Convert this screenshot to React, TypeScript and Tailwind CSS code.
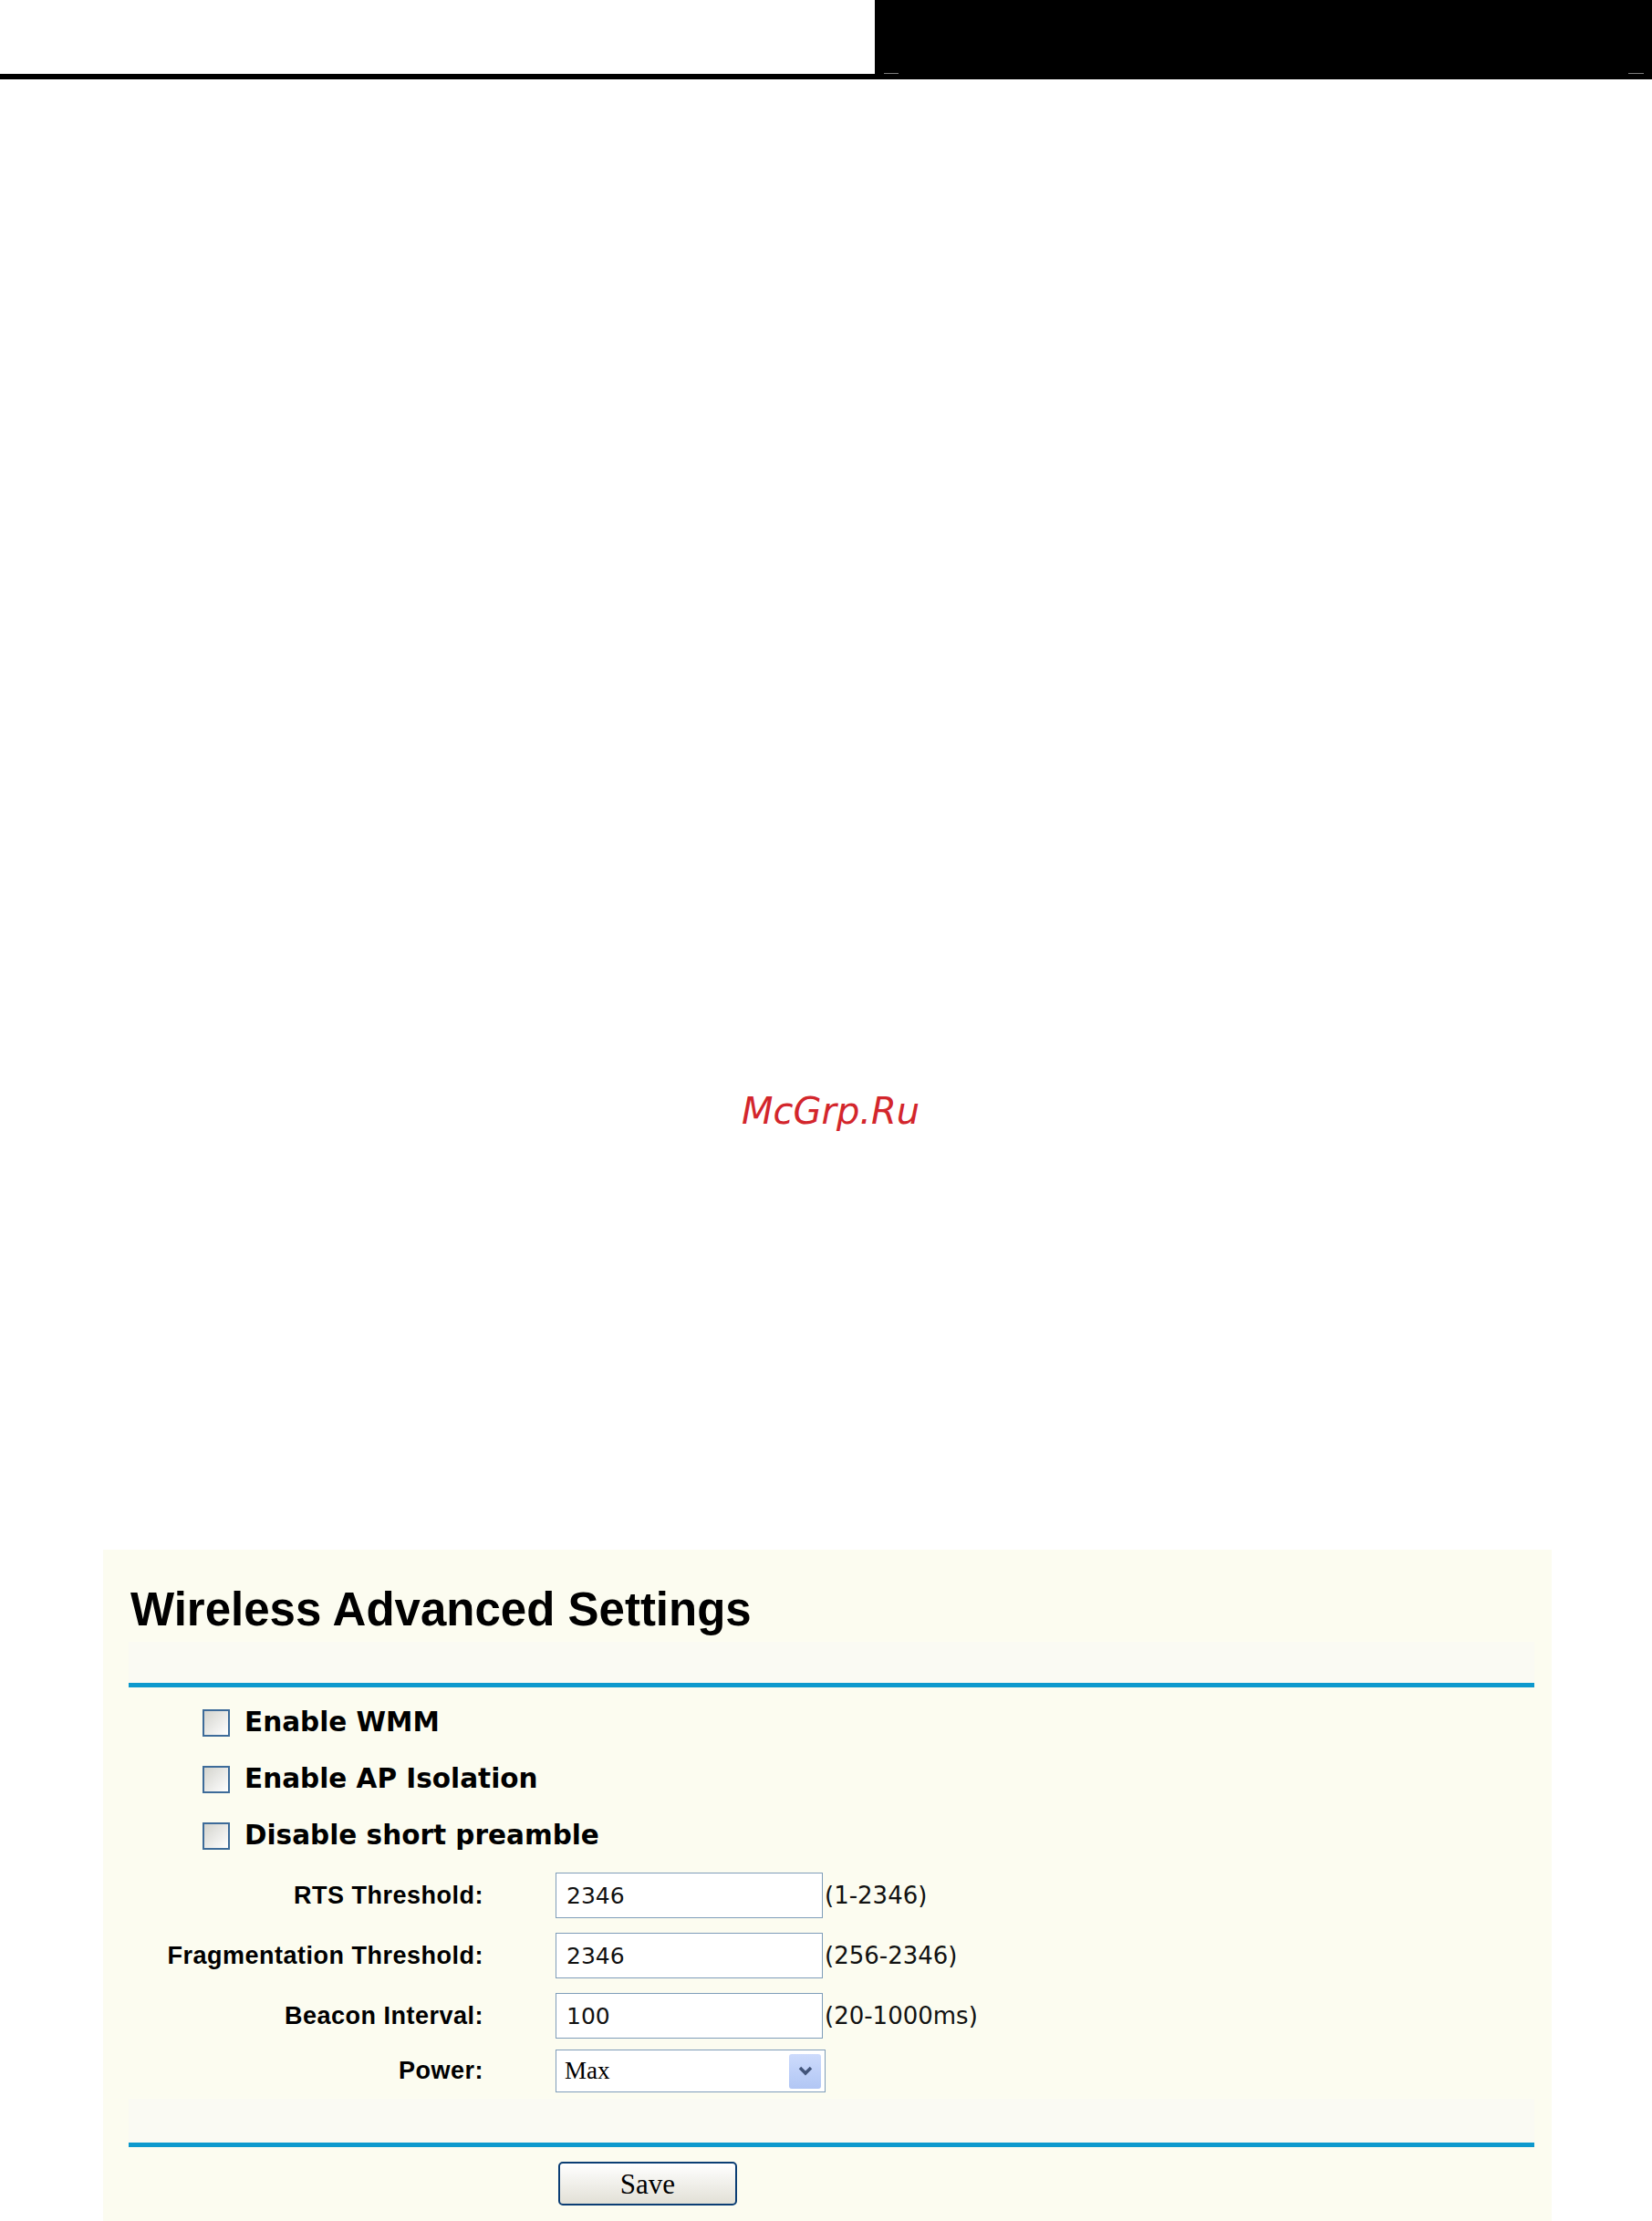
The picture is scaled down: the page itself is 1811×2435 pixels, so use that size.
import React from "react";

const sans = "font-['Liberation_Sans',Arial,sans-serif]";
const deja = "font-['DejaVu_Sans',Verdana,sans-serif]";
const serif = "font-['Liberation_Serif','Times_New_Roman',serif]";

function Checkbox({ label }: { label: string }) {
  return (
    <div className="flex h-[62px] items-center pl-[81px]">
      <span className="h-[30px] w-[30px] shrink-0 border-2 border-[#3d6b99] bg-linear-to-br from-[#d4d4ce] to-white" />
      <span className={`ml-[16px] text-[29.5px] font-bold leading-none text-black ${deja}`}>{label}</span>
    </div>
  );
}

function Label({ text }: { text: string }) {
  return (
    <div className={`w-[389px] shrink-0 text-right text-[27px] font-bold leading-none tracking-[0.5px] text-black ${sans}`}>
      {text}
    </div>
  );
}

function NumberRow({ label, value, range, className = "" }: { label: string; value: string; range: string; className?: string }) {
  return (
    <div className={`flex h-[50px] items-center ${className}`}>
      <Label text={label} />
      <input
        readOnly
        value={value}
        className={`ml-[79px] h-[50px] w-[293px] shrink-0 border border-[#7f9db9] bg-white pl-[11px] text-[25px] text-[#111] outline-none ${deja}`}
      />
      <span className={`ml-[2px] text-[26px] leading-none text-[#111] ${deja}`}>{range}</span>
    </div>
  );
}

export default function App() {
  return (
    <div className="flex h-[2435px] w-[1811px] flex-col overflow-hidden bg-white">
      {/* top strip */}
      <div className="flex h-[81px]">
        <div className="flex-1 bg-white" />
        <div className="flex w-[852px] items-end justify-between bg-black pl-[10px] pr-[9px]">
          <span className="h-px w-[16px] bg-[#7a7a7a]" />
          <span className="h-px w-[17px] bg-[#7a7a7a]" />
        </div>
      </div>
      <div className="h-[6px] bg-black" />

      {/* site mark */}
      <div className={`mt-[1111px] h-[40px] pl-[813px] text-[40px] italic leading-[40px] text-[#d3262c] ${deja}`}>
        McGrp.Ru
      </div>

      {/* settings panel */}
      <div className="ml-[113px] mt-[461px] flex w-[1588px] flex-1 flex-col bg-[#fcfcf0] pl-[28px] pr-[19px] pt-[41px]">
        <h1 className={`h-[50px] pl-[2px] text-[51px] font-bold leading-[50px] text-black ${sans}`}>
          Wireless Advanced Settings
        </h1>
        <div className="mt-[10px] h-[45px] bg-[#fafaf3]" />
        <div className="h-[5px] bg-[#0d99cd]" />

        <div className="pt-[8px]">
          <Checkbox label="Enable WMM" />
          <Checkbox label="Enable AP Isolation" />
          <Checkbox label="Disable short preamble" />
        </div>

        <div className="mt-[9px] flex flex-col">
          <NumberRow label="RTS Threshold:" value="2346" range="(1-2346)" />
          <NumberRow label="Fragmentation Threshold:" value="2346" range="(256-2346)" className="mt-[16px]" />
          <NumberRow label="Beacon Interval:" value="100" range="(20-1000ms)" className="mt-[16px]" />
          <div className="mt-[12px] flex h-[47px] items-center">
            <Label text="Power:" />
            <div className="ml-[79px] flex h-[47px] w-[296px] shrink-0 items-center justify-between border border-[#7f9db9] bg-white pl-[9px] pr-[4px]">
              <span className={`text-[27px] leading-none text-black ${serif}`}>Max</span>
              <span className="flex h-[38px] w-[35px] items-center justify-center rounded-[3px] bg-linear-to-b from-[#cddbfc] to-[#b1c6f4]">
                <svg width="18" height="13" viewBox="0 0 18 13">
                  <path d="M3 3 L9 9 L15 3" fill="none" stroke="#42557a" strokeWidth="3.5" />
                </svg>
              </span>
            </div>
          </div>
        </div>

        <div className="mt-[7px] h-[48px] bg-[#fafaf3]" />
        <div className="h-[5px] bg-[#0d99cd]" />

        <div className="mt-[16px] pl-[471px]">
          <button
            type="button"
            className={`flex h-[48px] w-[196px] items-center justify-center rounded-[5px] border-2 border-[#0b3e74] bg-linear-to-b from-white to-[#e2e0d6] text-[31px] leading-none text-black ${serif}`}
          >
            Save
          </button>
        </div>
      </div>
    </div>
  );
}
